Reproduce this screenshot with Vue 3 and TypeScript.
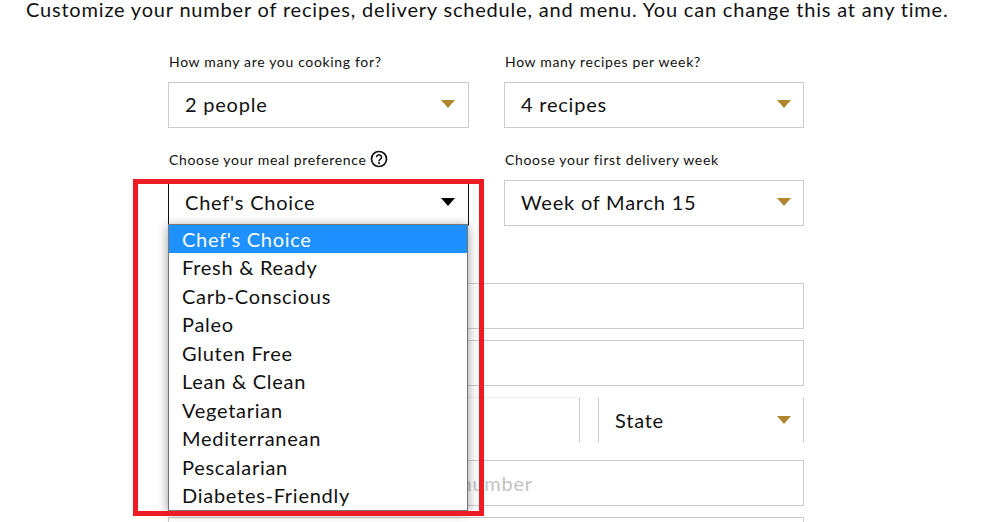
<script setup lang="ts">
const options: string[] = [
  "Chef's Choice",
  'Fresh & Ready',
  'Carb-Conscious',
  'Paleo',
  'Gluten Free',
  'Lean & Clean',
  'Vegetarian',
  'Mediterranean',
  'Pescalarian',
  'Diabetes-Friendly',
]
</script>

<template>
  <div class="page">
    <p class="intro">Customize your number of recipes, delivery schedule, and menu. You can change this at any time.</p>

    <div class="form">
      <div class="grid">
        <div class="field">
          <label class="label">How many are you cooking for?</label>
          <div class="select">
            <span>2 people</span>
            <i class="arrow"></i>
          </div>
        </div>
        <div class="field">
          <label class="label">How many recipes per week?</label>
          <div class="select">
            <span>4 recipes</span>
            <i class="arrow"></i>
          </div>
        </div>
        <div class="field">
          <label class="label">
            Choose your meal preference
            <svg class="help" width="18" height="18" viewBox="0 0 18 18">
              <circle cx="9" cy="9" r="7.5" fill="none" stroke="#111" stroke-width="1.7" />
              <path d="M6.5 7.2a2.5 2.4 0 1 1 3.9 2c-.9.6-1.4 1-1.4 2" fill="none" stroke="#111" stroke-width="1.6" />
              <circle cx="9" cy="13.1" r="1.05" fill="#111" />
            </svg>
          </label>
          <div class="select open">
            <span>Chef's Choice</span>
            <i class="arrow dark"></i>
            <ul class="menu">
              <li v-for="(opt, i) in options" :key="opt" :class="{ active: i === 0 }">{{ opt }}</li>
            </ul>
          </div>
        </div>
        <div class="field">
          <label class="label">Choose your first delivery week</label>
          <div class="select">
            <span>Week of March 15</span>
            <i class="arrow"></i>
          </div>
        </div>
      </div>

      <div class="inputs">
        <div class="input"></div>
        <div class="input"></div>
        <div class="city-row">
          <div class="input city"></div>
          <div class="select state">
            <span>State</span>
            <i class="arrow"></i>
          </div>
        </div>
        <div class="input phone"><span>Phone number</span></div>
        <div class="input"></div>
      </div>
    </div>

    <div class="highlight"></div>
  </div>
</template>

<style scoped>
.page {
  position: relative;
  width: 988px;
  height: 522px;
  overflow: hidden;
  background: #fff;
  color: #111;
  font-family: Lato, "Open Sans", sans-serif;
}

.intro {
  margin: 0;
  padding: 0 0 0 26px;
  height: 20px;
  line-height: 18px;
  font-size: 20px;
  letter-spacing: 0.81px;
  white-space: nowrap;
}

.form {
  width: 636px;
  margin-left: 168px;
  padding-top: 32px;
}

.grid {
  display: grid;
  grid-template-columns: 301px 300px;
  column-gap: 35px;
  row-gap: 22px;
}

.label {
  display: flex;
  align-items: center;
  gap: 4px;
  height: 20px;
  padding: 0 0 2px 1px;
  margin-bottom: 10px;
  box-sizing: border-box;
  font-size: 14px;
  letter-spacing: 0.66px;
}

.select {
  position: relative;
  display: flex;
  align-items: center;
  justify-content: space-between;
  box-sizing: border-box;
  height: 46px;
  padding: 0 12px 2px 16px;
  border: 1px solid #ccc;
  font-size: 20px;
  letter-spacing: 0.78px;
}

.field:nth-child(odd) .arrow {
  margin-right: 1px;
}

.open {
  border-color: #111;
  border-bottom-color: transparent;
}

.arrow {
  width: 0;
  height: 0;
  border-left: 7.5px solid transparent;
  border-right: 7.5px solid transparent;
  border-top: 8px solid #b08530;
}

.arrow.dark {
  border-top-color: #000;
}

.menu {
  position: absolute;
  z-index: 2;
  top: 43px;
  left: -1px;
  width: 300px;
  height: 287px;
  box-sizing: border-box;
  margin: 0;
  padding: 0;
  list-style: none;
  background: #fff;
  border: 1px solid #767676;
  box-shadow: 0 2px 10px rgba(0, 0, 0, 0.4);
}

.menu li {
  height: 28.45px;
  line-height: 28.45px;
  padding-left: 13px;
  letter-spacing: 0.72px;
}

.menu li.active {
  background: #1e90ff;
  color: #fff;
}

.inputs {
  display: flex;
  flex-direction: column;
  gap: 11px;
  margin-top: 57px;
}

.input {
  box-sizing: border-box;
  height: 46px;
  flex-shrink: 0;
  border: 1px solid #ccc;
  display: flex;
  align-items: center;
  padding-left: 16px;
  font-size: 20px;
  letter-spacing: 0.72px;
  color: #c4c4c4;
}

.city-row {
  display: flex;
  gap: 18px;
}

.city {
  width: 412px;
  border-top-color: #eee;
  border-bottom-color: transparent;
}

.state {
  flex: 1;
  padding-bottom: 0;
  border-top-color: transparent;
  border-bottom-color: transparent;
}

/* only the tail of the placeholder shows past the open menu */
.phone {
  margin-top: 6px;
  padding-left: 226px;
}

.highlight {
  position: absolute;
  z-index: 3;
  left: 133px;
  top: 179px;
  width: 351px;
  height: 337px;
  box-sizing: border-box;
  border: 5px solid #ed1c24;
  pointer-events: none;
}
</style>

<style>
html, body {
  margin: 0;
  overflow: hidden;
}
</style>
